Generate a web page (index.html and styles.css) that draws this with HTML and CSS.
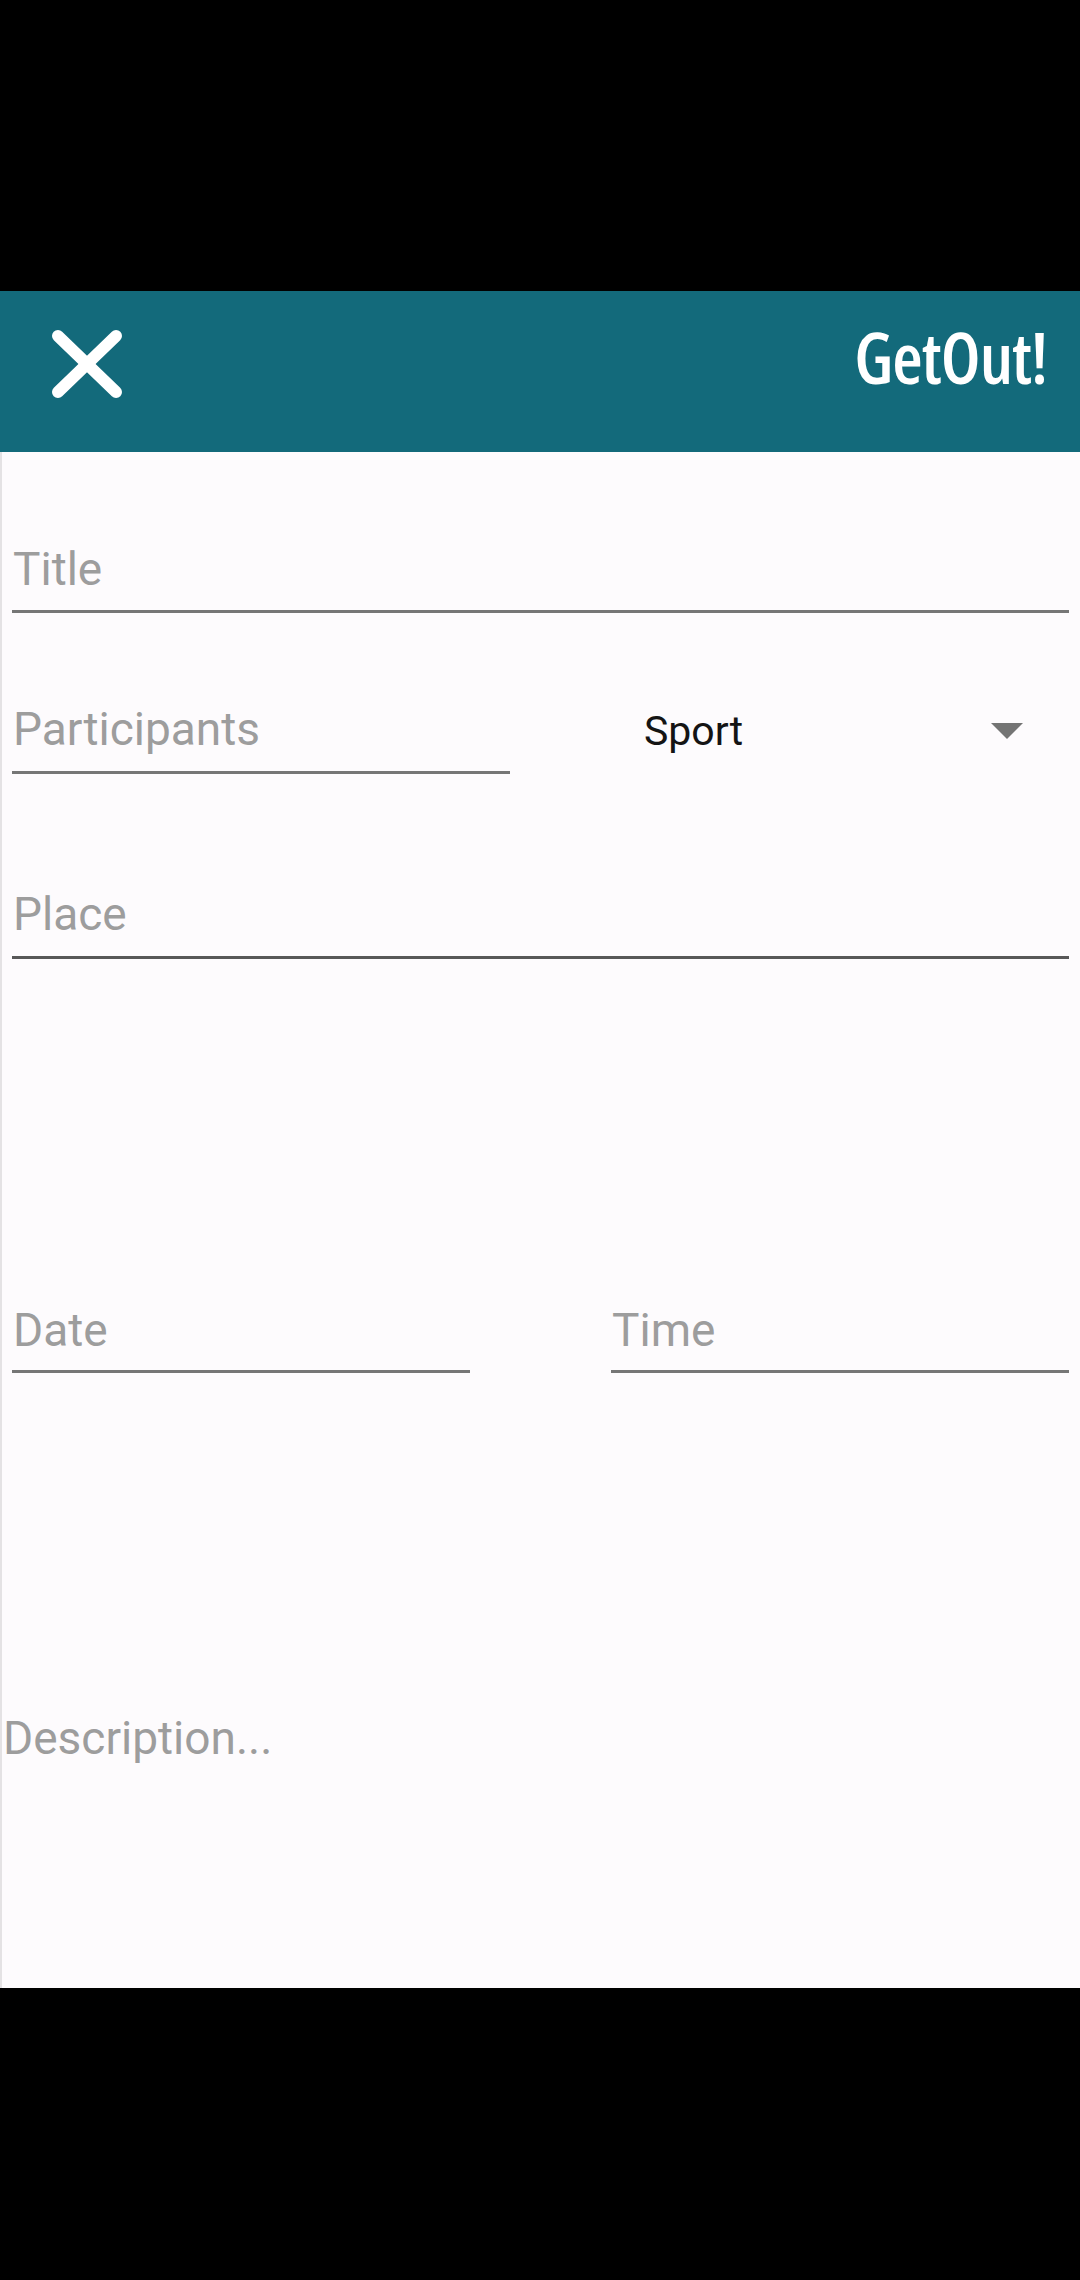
FILE: index.html
```html
<!DOCTYPE html>
<html lang="en">
<head>
<meta charset="utf-8">
<title>GetOut!</title>
<link rel="stylesheet" href="styles.css">
</head>
<body>
<div class="topbar"></div>
<header class="appbar">
  <svg class="close" width="82" height="80" viewBox="0 0 82 80" aria-label="Close">
    <line x1="12" y1="12" x2="70" y2="68" stroke="#fff" stroke-width="12" stroke-linecap="round"/>
    <line x1="70" y1="12" x2="12" y2="68" stroke="#fff" stroke-width="12" stroke-linecap="round"/>
  </svg>
  <div class="brand">GetOut!</div>
</header>
<main class="form">
  <div class="field field-title">Title</div>
  <div class="row row-participants">
    <div class="field field-participants">Participants</div>
    <div class="spinner">
      <span class="spinner-text">Sport</span>
      <span class="caret"></span>
    </div>
  </div>
  <div class="field field-place">Place</div>
  <div class="row row-datetime">
    <div class="field field-half">Date</div>
    <div class="field field-half">Time</div>
  </div>
  <div class="description">Description...</div>
</main>
<div class="bottombar"></div>
</body>
</html>
```
FILE: styles.css
```css
html, body {
  margin: 0;
  padding: 0;
  background: #000;
}
body {
  width: 1080px;
  height: 2280px;
  display: flex;
  flex-direction: column;
  font-family: Roboto, "Liberation Sans", sans-serif;
}
.topbar {
  height: 291px;
  background: #000;
}
.appbar {
  height: 161px;
  background: #136a7b;
  display: flex;
  align-items: flex-start;
  justify-content: space-between;
  box-sizing: border-box;
}
.close {
  display: block;
  margin-left: 46px;
  margin-top: 33px;
}
.brand {
  font-family: "Open Sans", "DejaVu Sans", sans-serif;
  font-weight: 600;
  font-size: 70px;
  font-stretch: 85%;
  line-height: 96px;
  color: #fff;
  margin-top: 18px;
  margin-right: 33px;
  letter-spacing: -1px;
}
.form {
  height: 1536px;
  background: #fdfbfd;
  box-shadow: inset 2px 0 0 #e4e2e4;
  display: flex;
  flex-direction: column;
  box-sizing: border-box;
}
.field {
  font-size: 46px;
  line-height: 54px;
  color: #9d9d9d;
  padding-left: 1px;
  border-bottom: 3px solid #767676;
}
.field-title {
  margin: 90px 11px 0 12px;
  padding-bottom: 14px;
}
.row {
  display: flex;
}
.row-participants {
  margin: 89px 11px 0 12px;
  align-items: flex-start;
}
.field-participants {
  width: 497px;
  padding-bottom: 15px;
}
.spinner {
  flex: 1;
  display: flex;
  align-items: center;
  justify-content: space-between;
  padding-left: 134px;
  padding-right: 46px;
  height: 54px;
  margin-top: 2px;
}
.spinner-text {
  font-size: 41px;
  line-height: 54px;
  color: #141414;
}
.caret {
  width: 0;
  height: 0;
  border-left: 16px solid transparent;
  border-right: 16px solid transparent;
  border-top: 16px solid #747474;
}
.field-place {
  margin: 113px 11px 0 12px;
  padding-bottom: 15px;
  border-bottom-color: #585858;
}
.row-datetime {
  margin: 344px 11px 0 12px;
  justify-content: space-between;
}
.field-half {
  width: 457px;
  padding-bottom: 13px;
}
.description {
  margin: 338px 0 0 3px;
  font-size: 46px;
  line-height: 54px;
  color: #9d9d9d;
}
.bottombar {
  flex: 1;
  background: #000;
}
```
